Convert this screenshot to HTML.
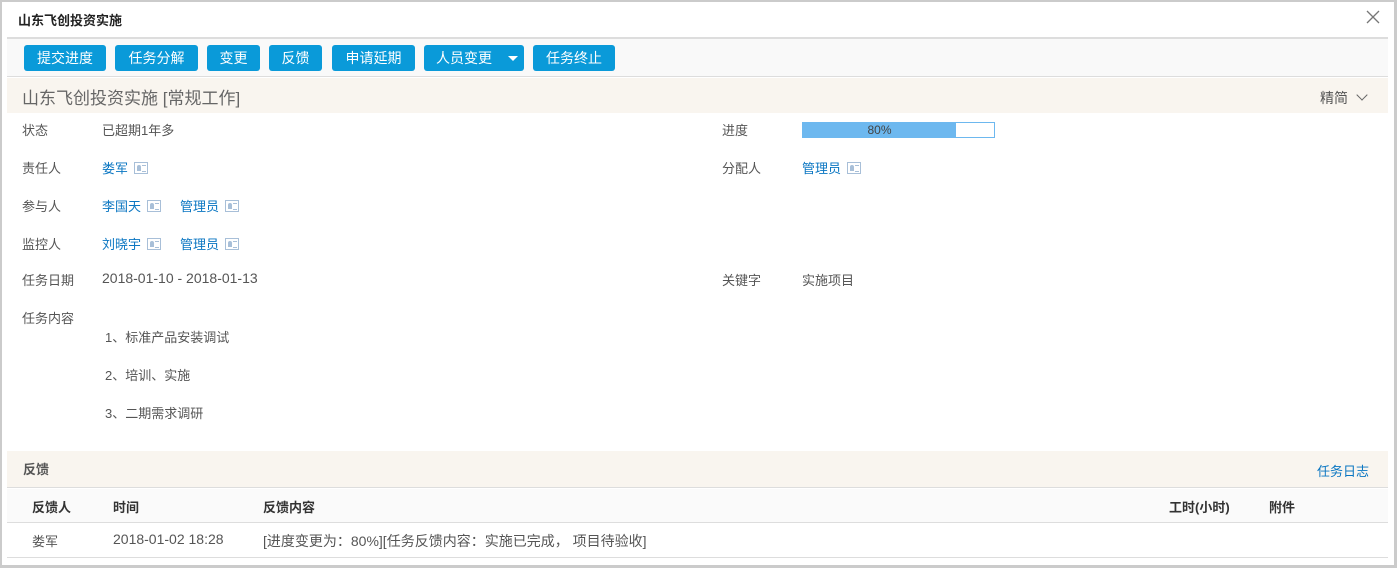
<!DOCTYPE html>
<html><head><meta charset="utf-8">
<style>
*{margin:0;padding:0;box-sizing:border-box}
body{width:1397px;height:568px;overflow:hidden;background:#fff;font-family:"Liberation Sans","Noto Sans CJK SC",sans-serif;font-size:13px;color:#555;position:relative}
.a{position:absolute;white-space:nowrap}
.frame{position:absolute;left:0;top:0;width:1397px;height:568px;border:2px solid #cbcbcb;border-right-width:3px;border-bottom-width:3px}
.btn{position:absolute;top:45px;height:26px;background:#0a9ad9;color:#fff;border-radius:3px;font-size:14px;line-height:26px;text-align:center}
.lbl{color:#555}
.lnk{color:#0a76c2}
.ic{display:inline-block;width:14px;height:12px;border:1px solid #a8bfd8;vertical-align:-1px;margin-left:6px;position:relative;background:#fff}
.ic:before{content:"";position:absolute;left:2px;top:2px;width:4px;height:6px;background:#a8bfd8;border-radius:2px 2px 0 0}
.ic:after{content:"";position:absolute;left:7px;top:2px;width:4px;height:5px;border-top:1px solid #a8bfd8;border-bottom:1px solid #a8bfd8}
.th{font-weight:bold;color:#333}
</style></head><body>
<div class="frame"></div>
<div class="a" style="left:18px;top:10px;font-size:13px;font-weight:bold;color:#222">山东飞创投资实施</div>
<svg class="a" style="left:1366px;top:10px" width="14" height="14"><path d="M1 1L13 13M13 1L1 13" stroke="#777" stroke-width="1.3"/></svg>
<div class="a" style="left:7px;top:37px;width:1381px;height:2px;background:#ddd"></div>
<div class="a" style="left:7px;top:39px;width:1381px;height:38px;background:#f9f9f9;border-bottom:1px solid #ddd"></div>
<div class="btn" style="left:24px;width:82px">提交进度</div>
<div class="btn" style="left:115px;width:83px">任务分解</div>
<div class="btn" style="left:207px;width:53px">变更</div>
<div class="btn" style="left:269px;width:53px">反馈</div>
<div class="btn" style="left:332px;width:83px">申请延期</div>
<div class="btn" style="left:424px;width:100px;text-align:left;padding-left:12px">人员变更<span style="position:absolute;left:84px;top:11px;border-left:5px solid transparent;border-right:5px solid transparent;border-top:5px solid #fff"></span></div>
<div class="btn" style="left:533px;width:82px">任务终止</div>
<div class="a" style="left:7px;top:78px;width:1381px;height:35px;background:#f9f5ef"></div>
<div class="a" style="left:22px;top:84px;font-size:17px;color:#666">山东飞创投资实施 [常规工作]</div>
<div class="a" style="left:1320px;top:88px;font-size:14px;color:#555">精简 <span style="display:inline-block;width:8px;height:8px;border-right:1px solid #666;border-bottom:1px solid #666;transform:rotate(45deg);margin-left:6px;vertical-align:4px"></span></div>

<div class="a lbl" style="left:22px;top:120px">状态</div>
<div class="a" style="left:102px;top:120px">已超期1年多</div>
<div class="a lbl" style="left:722px;top:120px">进度</div>
<div class="a" style="left:802px;top:122px;width:193px;height:16px;border:1px solid #6db8ef;background:#fff"><div style="width:153px;height:14px;background:#6db8ef;text-align:center;font-size:12px;line-height:14px;color:#444">80%</div></div>

<div class="a lbl" style="left:22px;top:158px">责任人</div>
<div class="a lnk" style="left:102px;top:158px">娄军<span class="ic"></span></div>
<div class="a lbl" style="left:722px;top:158px">分配人</div>
<div class="a lnk" style="left:802px;top:158px">管理员<span class="ic"></span></div>

<div class="a lbl" style="left:22px;top:196px">参与人</div>
<div class="a lnk" style="left:102px;top:196px">李国天<span class="ic"></span></div>
<div class="a lnk" style="left:180px;top:196px">管理员<span class="ic"></span></div>

<div class="a lbl" style="left:22px;top:234px">监控人</div>
<div class="a lnk" style="left:102px;top:234px">刘晓宇<span class="ic"></span></div>
<div class="a lnk" style="left:180px;top:234px">管理员<span class="ic"></span></div>

<div class="a lbl" style="left:22px;top:270px">任务日期</div>
<div class="a" style="left:102px;top:270px;font-size:14px">2018-01-10 - 2018-01-13</div>
<div class="a lbl" style="left:722px;top:270px">关键字</div>
<div class="a" style="left:802px;top:270px">实施项目</div>

<div class="a lbl" style="left:22px;top:308px">任务内容</div>
<div class="a" style="left:105px;top:327px">1、标准产品安装调试</div>
<div class="a" style="left:105px;top:365px">2、培训、实施</div>
<div class="a" style="left:105px;top:403px">3、二期需求调研</div>

<div class="a" style="left:7px;top:451px;width:1381px;height:37px;background:#f9f5ef;border-bottom:1px solid #ddd"></div>
<div class="a" style="left:23px;top:459px;font-weight:bold;color:#555">反馈</div>
<div class="a lnk" style="left:1317px;top:461px">任务日志</div>
<div class="a" style="left:7px;top:489px;width:1381px;height:34px;background:#fafafa;border-bottom:1px solid #ddd"></div>
<div class="a th" style="left:32px;top:497px">反馈人</div>
<div class="a th" style="left:113px;top:497px">时间</div>
<div class="a th" style="left:263px;top:497px">反馈内容</div>
<div class="a th" style="left:1169px;top:497px">工时(小时)</div>
<div class="a th" style="left:1269px;top:497px">附件</div>
<div class="a" style="left:32px;top:531px">娄军</div>
<div class="a" style="left:113px;top:531px;font-size:14px">2018-01-02 18:28</div>
<div class="a" style="left:263px;top:531px;font-size:14px">[进度变更为：80%][任务反馈内容：实施已完成， 项目待验收]</div>
<div class="a" style="left:7px;top:557px;width:1381px;height:1px;background:#ddd"></div>
</body></html>
